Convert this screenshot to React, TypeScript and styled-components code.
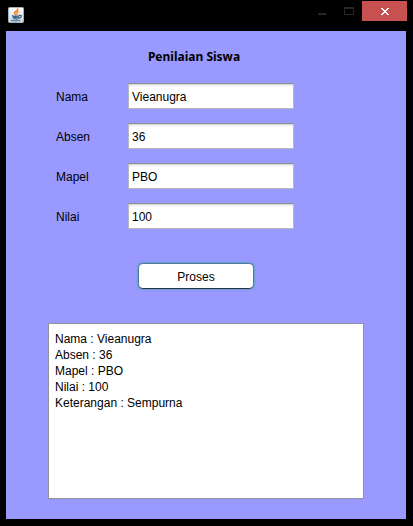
import React, { useState } from "react";
import styled, { createGlobalStyle } from "styled-components";

const GlobalStyle = createGlobalStyle`
  *, *::before, *::after { box-sizing: border-box; }
  body {
    margin: 0;
    background: #000;
    color: #000;
    font: 12px/16px "Liberation Sans", Arial, sans-serif;
  }
`;

const Window = styled.div`
  display: flex;
  flex-direction: column;
  min-height: 100vh;
  background: #000;
`;

const TitleBar = styled.header`
  display: flex;
  align-items: flex-start;
  justify-content: space-between;
  height: 31px;
  padding: 0 6px;
`;

const AppIcon = styled.svg`
  display: block;
  margin: 7px 0 0 2px;
`;

const WindowControls = styled.div`
  display: flex;
  margin-top: 1px;
`;

const WindowButton = styled.button<{ $close?: boolean }>`
  display: flex;
  align-items: center;
  justify-content: center;
  width: ${(p) => (p.$close ? 45 : 27)}px;
  height: 20px;
  padding: 0;
  border: 0;
  background: ${(p) => (p.$close ? "#c75050" : "transparent")};
`;

const Panel = styled.main`
  display: flex;
  flex: 1;
  flex-direction: column;
  margin: 0 7px 7px 6px;
  padding: 18px 42px 20px;
  background: #9999ff;
`;

const Heading = styled.h1`
  margin: 0 24px 18px 0;
  font: bold 12px/16px "Noto Sans", "Open Sans", sans-serif;
  text-align: center;
`;

const Form = styled.form`
  display: flex;
  flex-direction: column;
  gap: 14px;
`;

const Field = styled.div`
  display: grid;
  grid-template-columns: 72px minmax(0, 1fr);
  align-items: center;
  padding: 0 70px 0 8px;
`;

const FieldLabel = styled.label`
  padding-top: 2px;
`;

const TextInput = styled.input`
  width: 100%;
  height: 26px;
  padding: 2px 3px 0;
  border: 1px solid #b8b8bd;
  border-top-color: #8e8f96;
  background: linear-gradient(#d9d9dc 0 1px, #f1f1f2 1px 2px, #fff 3px);
  color: inherit;
  font: inherit;
`;

const ProcessButton = styled.button`
  align-self: center;
  width: 116px;
  height: 26px;
  margin: 20px 20px 0 0;
  padding: 2px 0 0;
  border: 1px solid #4a7a9c;
  border-bottom-color: #26304a;
  border-radius: 5px;
  background: #fff;
  box-shadow: 0 0 2px 1px #6a9fd0;
  color: inherit;
  font: inherit;
`;

const Output = styled.textarea`
  display: block;
  flex: 1;
  width: 100%;
  min-height: 100px;
  margin-top: 34px;
  padding: 7px 6px;
  border: 1px solid #92929b;
  background: #fff;
  color: inherit;
  font: inherit;
  resize: none;
`;

const fields = ["Nama", "Absen", "Mapel", "Nilai"] as const;
type Values = Record<(typeof fields)[number], string>;

const initial: Values = { Nama: "Vieanugra", Absen: "36", Mapel: "PBO", Nilai: "100" };

function report(values: Values) {
  const remark = Number(values.Nilai) === 100 ? "Sempurna" : "-";
  return [...fields.map((f) => `${f} : ${values[f]}`), `Keterangan : ${remark}`].join("\n");
}

function JavaIcon() {
  return (
    <AppIcon width="16" height="16" viewBox="0 0 16 16" aria-hidden="true">
      <defs>
        <linearGradient id="tile" x1="0" y1="0" x2="0" y2="1">
          <stop offset="0" stopColor="#ffffff" />
          <stop offset="1" stopColor="#c9d5df" />
        </linearGradient>
      </defs>
      <rect x="0.5" y="0.5" width="15" height="15" rx="1" fill="url(#tile)" stroke="#9fb2c2" />
      <g fill="none" strokeLinecap="round">
        <path d="M9.8 2C10 4 6.2 4.6 6.5 6.2C6.6 7 7.6 7.4 7.5 8.2" stroke="#ee7b1c" strokeWidth="1.4" />
        <path d="M10.8 4.6C9 5.2 8.4 5.9 9 6.7C9.3 7.2 9 7.8 8.6 8.1" stroke="#ee7b1c" strokeWidth="1.1" />
        <path d="M4.5 8.8C6 9.5 9.4 9.4 11 8.8M5 10.4C6.6 11.1 9.2 11 10.7 10.5M11.4 8.4C14.2 7.8 13.8 10.4 11.2 11" stroke="#3c6484" strokeWidth="1.3" />
        <path d="M5.6 11.8C7 12.2 8.8 12.2 10.2 11.8M3.3 13.4C6 14.1 9.8 14 12 13.3" stroke="#3c6484" />
      </g>
    </AppIcon>
  );
}

export default function App() {
  const [values, setValues] = useState<Values>(initial);
  const [output, setOutput] = useState(report(initial));

  return (
    <>
      <GlobalStyle />
      <Window>
        <TitleBar>
          <JavaIcon />
          <WindowControls>
            <WindowButton type="button" aria-label="Minimize">
              <svg width="8" height="12" viewBox="0 0 8 12">
                <path d="M0 8h8v2H0z" fill="#272727" />
              </svg>
            </WindowButton>
            <WindowButton type="button" aria-label="Maximize">
              <svg width="10" height="8" viewBox="0 0 10 8" shapeRendering="crispEdges">
                <path d="M0 0h10v8H0zM1 2v5h8V2z" fill="#272727" fillRule="evenodd" />
              </svg>
            </WindowButton>
            <WindowButton type="button" aria-label="Close" $close>
              <svg width="8" height="7" viewBox="0 0 8 7" shapeRendering="crispEdges">
                <path
                  d="M0 0h2v1h1v1h2V1h1V0h2v1H7v1H6v1H5v1h1v1h1v1h1v1H6V6H5V5H3v1H2v1H0V6h1V5h1V4h1V3H2V2H1V1H0z"
                  fill="#fff"
                />
              </svg>
            </WindowButton>
          </WindowControls>
        </TitleBar>
        <Panel>
          <Heading>Penilaian Siswa</Heading>
          <Form
            onSubmit={(e) => {
              e.preventDefault();
              setOutput(report(values));
            }}
          >
            {fields.map((name) => (
              <Field key={name}>
                <FieldLabel htmlFor={name}>{name}</FieldLabel>
                <TextInput
                  id={name}
                  value={values[name]}
                  onChange={(e) => setValues({ ...values, [name]: e.target.value })}
                />
              </Field>
            ))}
            <ProcessButton type="submit">Proses</ProcessButton>
          </Form>
          <Output aria-label="Hasil" readOnly value={output} />
        </Panel>
      </Window>
    </>
  );
}
